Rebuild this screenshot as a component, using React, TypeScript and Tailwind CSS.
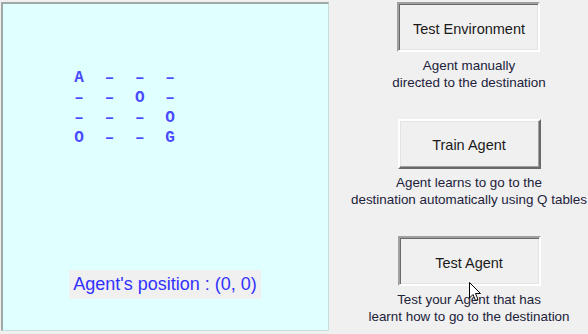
import React from 'react';

const grid = [
  ['A', '–', '–', '–'],
  ['–', '–', 'O', '–'],
  ['–', '–', '–', 'O'],
  ['O', '–', '–', 'G'],
];

const actions = [
  {
    title: 'Test Environment',
    pressed: true,
    lines: ['Agent manually', 'directed to the destination'],
  },
  {
    title: 'Train Agent',
    pressed: false,
    lines: ['Agent learns to go to the', 'destination automatically using Q tables'],
  },
  {
    title: 'Test Agent',
    pressed: true,
    lines: ['Test your Agent that has', 'learnt how to go to the destination'],
  },
];

const Cursor = () => (
  <svg
    className="absolute left-[469px] top-[282px]"
    width="13"
    height="20"
    viewBox="0 0 13 20"
  >
    <path
      d="M0.5 0.5 L0.5 16 L4 12.5 L6.5 18.5 L9 17.5 L6.5 11.5 L11.5 11.5 Z"
      fill="#ffffff"
      stroke="#000000"
      strokeWidth="1"
      strokeLinejoin="round"
    />
  </svg>
);

const App = () => {
  return (
    <div
      className="relative w-[588px] h-[334px] bg-[#f0f0f0] flex overflow-hidden"
      style={{ fontFamily: '"Liberation Sans", Arial, sans-serif' }}
    >
      {/* board panel */}
      <div className="ml-[1px] mt-[2px] w-[328px] h-[329px] bg-[#e0ffff] border-t-2 border-l-2 border-t-[#a0a8a8] border-l-[#a0a8a8] border-b border-r border-b-[#c8dede] border-r-[#c8dede] flex flex-col">
        <div
          className="mt-[64px] ml-[61px] flex flex-col text-[#4a4aff] text-[16px] font-bold"
          style={{ fontFamily: '"Liberation Mono", "Courier New", monospace' }}
        >
          {grid.map((row, r) => (
            <div key={r} className="flex h-[20px] leading-[20px]">
              {row.map((cell, c) => (
                <span key={c} className="w-[30.3px] text-center">
                  {cell}
                </span>
              ))}
            </div>
          ))}
        </div>
        <div className="mt-auto mb-[31px] ml-[66px] self-start bg-[#f0f0f0] h-[29px] w-[192px] flex items-center justify-center text-[18px] text-[#3232ff] whitespace-nowrap">
          Agent&apos;s position : (0, 0)
        </div>
      </div>

      {/* actions */}
      <div className="ml-[22px] w-[236px] flex flex-col items-center pt-[2px]">
        {actions.map((a, i) => (
          <div key={i} className={i > 0 ? 'flex flex-col items-center mt-[28px]' : 'flex flex-col items-center'}>
            <div
              className={
                a.pressed
                  ? 'w-[143px] h-[50px] pt-[5px] flex items-center justify-center text-[14.5px] text-[#1a1a1a] bg-[#f0f0f0] border-2 border-t-[#a0a0a0] border-l-[#a0a0a0] border-b-[#ffffff] border-r-[#ffffff] shadow-[inset_1px_1px_0_#696969,inset_-1px_-1px_0_#e3e3e3]'
                  : 'w-[143px] h-[50px] pt-[3px] flex items-center justify-center text-[14.5px] text-[#1a1a1a] bg-[#f0f0f0] border-2 border-t-[#ffffff] border-l-[#ffffff] border-b-[#696969] border-r-[#696969] shadow-[inset_-1px_-1px_0_#a0a0a0,inset_1px_1px_0_#e3e3e3]'
              }
            >
              {a.title}
            </div>
            <div className="mt-[5px] flex flex-col items-center text-[13.4px] leading-[17px] text-[#22223a] whitespace-nowrap">
              {a.lines.map((l, j) => (
                <span key={j}>{l}</span>
              ))}
            </div>
          </div>
        ))}
      </div>

      <Cursor />
    </div>
  );
};

export default App;
